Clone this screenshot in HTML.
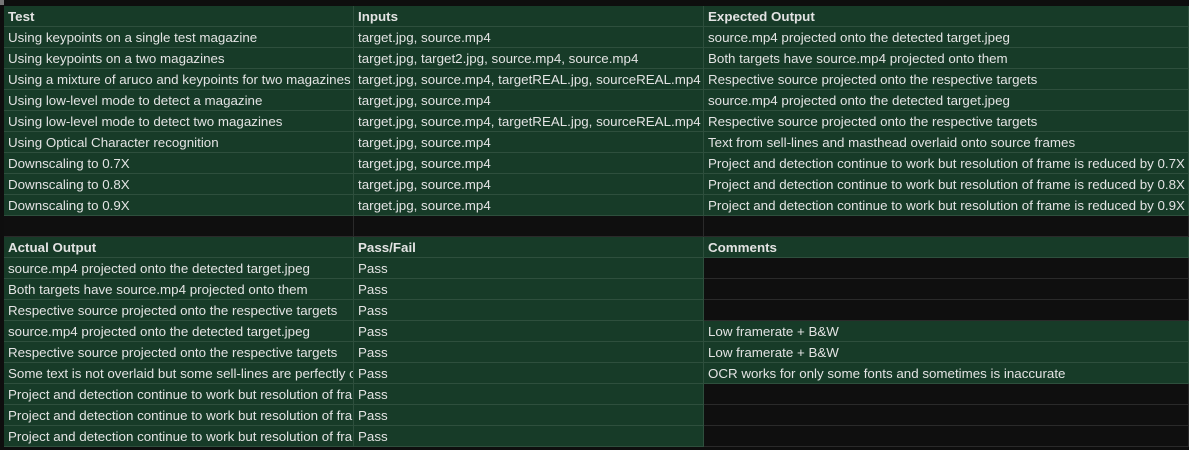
<!DOCTYPE html><html><head><style>
body{margin:0;width:1189px;height:450px;background:#0e0e0e;overflow:hidden;font-family:"Liberation Sans",sans-serif;font-size:13.35px;color:#e3e3e3;position:relative}
.c{position:absolute;height:20px;line-height:22px;padding-left:4px;box-sizing:border-box;white-space:nowrap;overflow:hidden;background:#173b28;border-right:1px solid #2e4f3d;border-bottom:1px solid #2e4f3d}
.k{background:#0f0f0f;border-color:#2a2a2a}
.b{font-weight:bold}
</style></head><body>
<div style="position:absolute;left:0;top:0;width:4px;height:5px;background:#777"></div>
<div id="g"></div>
<script>
var r1=[["Test","Inputs","Expected Output"],
["Using keypoints on a single test magazine","target.jpg, source.mp4","source.mp4 projected onto the detected target.jpeg"],
["Using keypoints on a two magazines","target.jpg, target2.jpg, source.mp4, source.mp4","Both targets have source.mp4 projected onto them"],
["Using a mixture of aruco and keypoints for two magazines","target.jpg, source.mp4, targetREAL.jpg, sourceREAL.mp4","Respective source projected onto the respective targets"],
["Using low-level mode to detect a magazine","target.jpg, source.mp4","source.mp4 projected onto the detected target.jpeg"],
["Using low-level mode to detect two magazines","target.jpg, source.mp4, targetREAL.jpg, sourceREAL.mp4","Respective source projected onto the respective targets"],
["Using Optical Character recognition","target.jpg, source.mp4","Text from sell-lines and masthead overlaid onto source frames"],
["Downscaling to 0.7X","target.jpg, source.mp4","Project and detection continue to work but resolution of frame is reduced by 0.7X"],
["Downscaling to 0.8X","target.jpg, source.mp4","Project and detection continue to work but resolution of frame is reduced by 0.8X"],
["Downscaling to 0.9X","target.jpg, source.mp4","Project and detection continue to work but resolution of frame is reduced by 0.9X"],
null,
["Actual Output","Pass/Fail","Comments"],
["source.mp4 projected onto the detected target.jpeg","Pass",""],
["Both targets have source.mp4 projected onto them","Pass",""],
["Respective source projected onto the respective targets","Pass",""],
["source.mp4 projected onto the detected target.jpeg","Pass","Low framerate + B&W"],
["Respective source projected onto the respective targets","Pass","Low framerate + B&W"],
["Some text is not overlaid but some sell-lines are perfectly overlaid","Pass","OCR works for only some fonts and sometimes is inaccurate"],
["Project and detection continue to work but resolution of frame is reduced","Pass",""],
["Project and detection continue to work but resolution of frame is reduced","Pass",""],
["Project and detection continue to work but resolution of frame is reduced","Pass",""]];
var xs=[4,354,704,1189],h="";
r1.forEach(function(r,i){var y=6+i*21;for(var j=0;j<3;j++){var t=r?r[j]:"";var k=!r||(i>11&&j==2&&t=="");
var b=(i==0||i==11);
h+='<div class="c'+(k?' k':'')+(b?' b':'')+'" style="left:'+xs[j]+'px;top:'+y+'px;width:'+(xs[j+1]-xs[j])+'px;height:21px">'+t.replace(/&/g,'&amp;')+'</div>';}});
document.getElementById('g').innerHTML=h;
</script>
</body></html>
